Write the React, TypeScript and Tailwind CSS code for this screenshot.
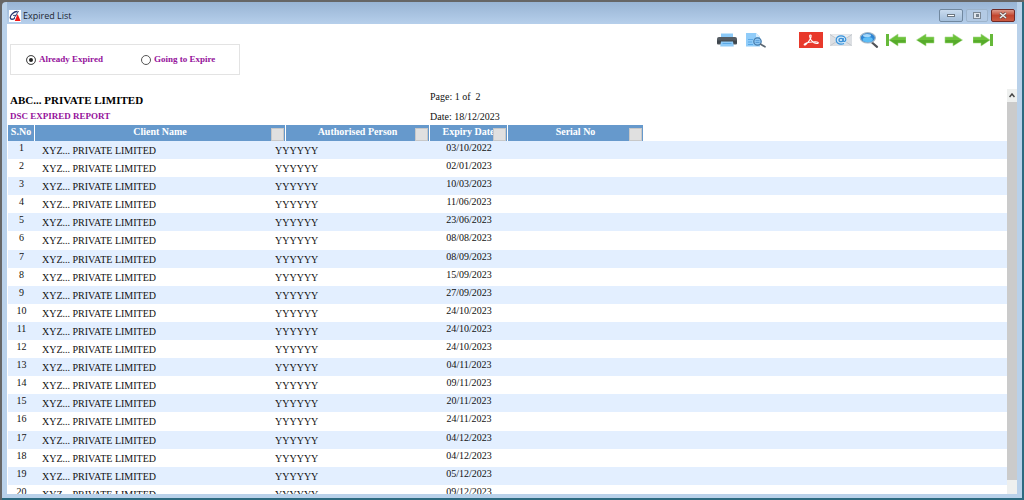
import type { ReactNode } from "react";

type Row = { no: number; expiry: string };

const expiries = [
  "03/10/2022", "02/01/2023", "10/03/2023", "11/06/2023", "23/06/2023",
  "08/08/2023", "08/09/2023", "15/09/2023", "27/09/2023", "24/10/2023",
  "24/10/2023", "24/10/2023", "04/11/2023", "09/11/2023", "20/11/2023",
  "24/11/2023", "04/12/2023", "04/12/2023", "05/12/2023", "09/12/2023",
];

const rows: Row[] = expiries.map((expiry, i) => ({ no: i + 1, expiry }));

function AppIcon() {
  return (
    <svg viewBox="0 0 12 12" className="size-3 shrink-0" aria-hidden>
      <rect width="12" height="12" fill="#fff" />
      <path d="M8.500 1.500C5 1.200 1.200 4.800 1.200 7.600c0 2.200 2.600 2 4.600.6" fill="none" stroke="#27366f" strokeWidth="1.300" />
      <path d="M9.600 1 5.200 8M4 5.400h3.500" stroke="#27366f" strokeWidth=".9" />
      <path d="m8.600 4 3 7H5.800z" fill="#f01818" />
    </svg>
  );
}

function PrintIcon() {
  return (
    <svg viewBox="0 0 20 16" className="h-4 w-5" aria-hidden>
      <path d="M4 1.500h12V6H4z" fill="#8ccaf8" />
      <path d="M2 5h16a2 2 0 0 1 2 2v4.500a1 1 0 0 1-1 1H1a1 1 0 0 1-1-1V7a2 2 0 0 1 2-2z" fill="#555c63" />
      <path d="M0 8.500h20v3H0z" fill="#3f464d" />
      <path d="M4 9.500h12l.8 5H3.200z" fill="#8fcbf8" />
      <path d="M5.500 11.500h9" stroke="#5ba9e6" />
    </svg>
  );
}

function PreviewIcon() {
  return (
    <svg viewBox="0 0 20 16" className="h-4 w-5" aria-hidden>
      <path d="M0 1h10l4 4v9.500H0z" fill="#90ccf9" />
      <path d="M10 1v4h4z" fill="#d3ebfd" />
      <path d="M2 7.500h5M2 10h4M2 12.500h5" stroke="#5ba9e6" />
      <circle cx="11.500" cy="9.500" r="3.700" fill="#8fc8f4" stroke="#4a7fae" strokeWidth="1.300" />
      <path d="M9.500 8.700h4M9.500 10.500h4" stroke="#4b91cf" strokeWidth=".8" />
      <path d="m14.700 12.200 4.300 2.600" stroke="#5b6772" strokeWidth="1.600" strokeLinecap="round" />
    </svg>
  );
}

function PdfIcon() {
  return (
    <svg viewBox="0 0 24 16" className="h-4 w-6" aria-hidden>
      <rect width="24" height="16" fill="#e8392b" />
      <path
        d="M11.300 3c-1.200 0-.6 3 1 5.200 1.600 2.200 4.200 3.600 6.200 3.300 1.600-.4.600-1.800-2.200-1.800-3.500 0-8.300.7-10.300 1.900-1.600 1-.6 2 .8.900C9 10.900 12.600 5.600 12.200 3.600c-.1-.4-.4-.6-.9-.6z"
        fill="none"
        stroke="#fff"
        strokeWidth="1.100"
      />
    </svg>
  );
}

function MailIcon() {
  return (
    <svg viewBox="0 0 22 12" className="h-3 w-[22px]" aria-hidden>
      <rect width="22" height="12" fill="#dcdfe3" />
      <path d="m0 .5 11 7 11-7" fill="#ebedef" stroke="#c3c8cd" />
      <path d="m.5 11.500 7.500-5M21.500 11.500 14 6.500" fill="none" stroke="#c3c8cd" />
      <ellipse cx="11" cy="6" rx="5.800" ry="5.200" fill="#cfe8fa" />
      <ellipse cx="11" cy="6" rx="2" ry="1.700" fill="none" stroke="#3b90d6" strokeWidth="1.300" />
      <path d="M13.200 4v2.400c0 1.500 2.600 1.400 2.600-.6 0-2.400-2.200-4-4.800-4-2.700 0-4.800 1.800-4.800 4.200s2.100 4.200 4.800 4.200c1.200 0 2.200-.2 3-.7" fill="none" stroke="#3b90d6" strokeWidth="1.200" />
    </svg>
  );
}

function ZoomIcon() {
  return (
    <svg viewBox="0 0 20 16" className="h-4 w-5" aria-hidden>
      <path d="m13 10.500 5 4.300" stroke="#505358" strokeWidth="2.200" strokeLinecap="round" />
      <ellipse cx="8.800" cy="5.800" rx="7.600" ry="5.100" fill="#2f86d4" stroke="#a3b6c6" strokeWidth="1.200" />
      <ellipse cx="8.800" cy="7.600" rx="5" ry="2.600" fill="#5dbdf6" />
      <ellipse cx="8" cy="3.400" rx="4" ry="1.500" fill="#a5d8fa" />
    </svg>
  );
}

function ArrowIcon({ flip, bar }: { flip?: boolean; bar?: boolean }) {
  return (
    <svg viewBox="0 0 20 14" className={flip ? "h-[14px] w-5 -scale-x-100" : "h-[14px] w-5"} aria-hidden>
      <path d={bar ? "M0 4h8V1l9 6-9 6v-3H0z" : "M1 4h8V1l9.500 6L9 13v-3H1z"} fill="#6cc23a" stroke="#a5d78b" strokeWidth=".6" />
      <path d={bar ? "M.5 7h16l-8 5.300V9.500h-8z" : "M1.500 7H18l-8.500 5.300V9.500h-8z"} fill="#57ab2b" />
      {bar && <path d="M17 1h3v12h-3z" fill="#66b93a" />}
    </svg>
  );
}

function ToolButton({ label, children }: { label: string; children: ReactNode }) {
  return (
    <button type="button" aria-label={label} className="flex h-4 items-center">
      {children}
    </button>
  );
}

function FilterButton({ label }: { label: string }) {
  return (
    <button
      type="button"
      aria-label={label}
      className="absolute right-px bottom-0 size-[13px] border border-[#c8c8c8] bg-[#e0e0e0]"
    />
  );
}

function TitleBar() {
  return (
    <header className="flex h-[22px] items-center justify-between bg-linear-to-b from-[#98b4d4] to-[#b6cfeb] px-[2px] pt-[5px]">
      <h1 className="flex items-center gap-[2px] font-['Open_Sans',sans-serif] text-[9px] text-[#1d2733]">
        <AppIcon />
        Expired List
      </h1>
      <div className="flex gap-[3px]">
        <button type="button" aria-label="Minimize" className="flex h-[13px] w-6 items-center justify-center rounded-xs border border-[#71889f] bg-linear-to-b from-[#c9dbee] to-[#a3bedb]">
          <span className="h-[3px] w-2 border border-[#6b7681] bg-white" />
        </button>
        <button type="button" aria-label="Maximize" className="flex h-[13px] w-[22px] items-center justify-center rounded-xs border border-[#9db4cc] bg-[#b3cae4]">
          <span className="flex h-[7px] w-2 items-center justify-center border border-[#7b8895] bg-[#dfe6ed]">
            <span className="size-[3px] bg-[#77838f]" />
          </span>
        </button>
        <button type="button" aria-label="Close" className="flex h-[13px] w-6 items-center justify-center rounded-xs border border-[#702a26] bg-linear-to-b from-[#dc9a8c] via-[#c2452f] to-[#cb5a42]">
          <svg viewBox="0 0 8 7" className="h-[7px] w-2" aria-hidden>
            <path d="m1 1 6 5M7 1 1 6" stroke="#5b4a4a" strokeWidth="2.800" />
            <path d="m1 1 6 5M7 1 1 6" stroke="#eee" strokeWidth="1.500" />
          </svg>
        </button>
      </div>
    </header>
  );
}

function RadioOption({ label, checked }: { label: string; checked?: boolean }) {
  return (
    <label className="flex items-center gap-[3px]">
      <input
        type="radio"
        name="status"
        defaultChecked={checked}
        className="size-[10px] appearance-none rounded-full border border-[#555] bg-white checked:bg-[#222] checked:shadow-[inset_0_0_0_2px_white]"
      />
      {label}
    </label>
  );
}

function Toolbar() {
  return (
    <div className="flex items-start justify-between pr-6 pl-[3px]">
      <fieldset className="mt-5 grid h-[31px] w-[230px] grid-cols-[115px_auto] items-center border border-[#e3e3e3] pl-[15px] text-[9px] font-bold text-[#95129b]">
        <RadioOption label="Already Expired" checked />
        <RadioOption label="Going to Expire" />
      </fieldset>
      <div className="mt-2 flex items-center">
        <div className="mr-[33px] flex items-center gap-[9px]">
          <ToolButton label="Print"><PrintIcon /></ToolButton>
          <ToolButton label="Preview"><PreviewIcon /></ToolButton>
        </div>
        <div className="mr-[7px] flex items-center gap-[7px]">
          <ToolButton label="Export PDF"><PdfIcon /></ToolButton>
          <ToolButton label="Email"><MailIcon /></ToolButton>
          <ToolButton label="Zoom"><ZoomIcon /></ToolButton>
        </div>
        <div className="flex items-center gap-[9px]">
          <ToolButton label="First page"><ArrowIcon flip bar /></ToolButton>
          <ToolButton label="Previous page"><ArrowIcon flip /></ToolButton>
          <ToolButton label="Next page"><ArrowIcon /></ToolButton>
          <ToolButton label="Last page"><ArrowIcon bar /></ToolButton>
        </div>
      </div>
    </div>
  );
}

function ReportTable() {
  return (
    <table className="h-[378px] w-full shrink-0 table-fixed border-separate border-spacing-0">
      <colgroup>
        <col className="w-[27px]" />
        <col className="w-[240px]" />
        <col className="w-[11px]" />
        <col className="w-[144px]" />
        <col className="w-[78px]" />
        <col className="w-[135px]" />
        <col />
      </colgroup>
      <thead>
        <tr className="h-4 align-top text-white [&>th]:relative [&>th]:bg-[#6699cc] [&>th]:p-0 [&>th]:leading-[13px]">
          <th className="border-r border-white">S.No</th>
          <th colSpan={2} className="border-r border-white">Client Name<FilterButton label="Filter client name" /></th>
          <th className="border-r border-white">Authorised Person<FilterButton label="Filter authorised person" /></th>
          <th className="border-r border-white">Expiry Date<FilterButton label="Filter expiry date" /></th>
          <th>Serial No<FilterButton label="Filter serial no" /></th>
        </tr>
      </thead>
      <tbody>
        {rows.map((row) => (
          <tr key={row.no} className="align-top leading-[14px] odd:bg-[#e3efff] [&>td]:p-0">
            <td className="text-center">{row.no}</td>
            <td><span className="block pt-[3px] pl-[7px]">XYZ... PRIVATE LIMITED</span></td>
            <td colSpan={2}><span className="block pt-[3px]">YYYYYY</span></td>
            <td className="text-center">{row.expiry}</td>
            <td />
            <td />
          </tr>
        ))}
      </tbody>
    </table>
  );
}

function ScrollBar() {
  return (
    <div className="flex w-[10px] shrink-0 flex-col bg-[#eef0ef]" aria-hidden>
      <div className="flex h-[13px] items-center justify-center">
        <svg viewBox="0 0 6 5" className="h-[5px] w-[6px]">
          <path d="m.5 4 2.500-3 2.500 3" fill="none" stroke="#444" strokeWidth="1.500" />
        </svg>
      </div>
      <div className="mb-[14px] flex-1 bg-[#cbcbcb]" />
    </div>
  );
}

export default function App() {
  return (
    <div className="h-screen overflow-hidden border-t-2 border-l-2 border-[#666] bg-[#666] font-['Liberation_Serif',serif] text-[10px] text-[#111]">
      <div className="flex h-full flex-col rounded-tl border-r-2 border-b-2 border-[#2c6a80] bg-[#b9d1ea] pr-[5px] pb-1 pl-[5px]">
        <TitleBar />
        <main className="flex min-h-0 flex-1 flex-col bg-white">
          <Toolbar />
          <div className="mt-[14px] flex min-h-0 flex-1">
            <section className="flex min-w-0 flex-1 flex-col overflow-hidden pl-px">
              <div className="flex h-9 shrink-0 pl-[2px]">
                <div className="w-[420px] pt-[3px]">
                  <h2 className="text-[11px] leading-4 font-bold text-black">ABC... PRIVATE LIMITED</h2>
                  <p className="text-[9px] leading-4 font-bold text-[#95129b]">DSC EXPIRED REPORT</p>
                </div>
                <div className="flex flex-col gap-1 leading-4">
                  <p>Page: 1 of&nbsp; 2</p>
                  <p>Date: 18/12/2023</p>
                </div>
              </div>
              <ReportTable />
            </section>
            <ScrollBar />
          </div>
        </main>
      </div>
    </div>
  );
}
